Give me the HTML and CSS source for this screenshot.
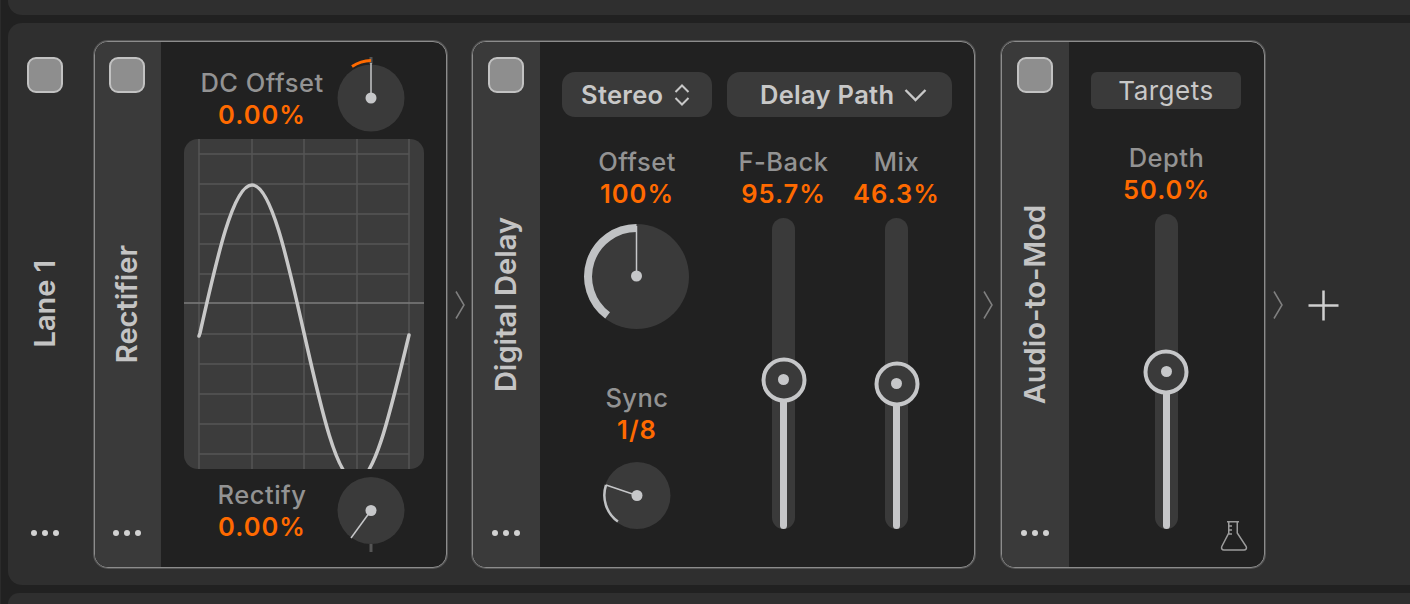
FILE: index.html
```html
<!DOCTYPE html>
<html lang="en">
<head>
<meta charset="utf-8">
<title>Lane 1</title>
<link rel="stylesheet" href="styles.css">
</head>
<body>
<div class="page">
  <div class="lane-edge lane-edge-top"></div>
  <section class="lane">
    <div class="rail">
      <span class="check"></span>
      <h2 class="title">Lane 1</h2>
      <span class="dots"><i></i><i></i><i></i></span>
    </div>

    <article class="device rectifier">
      <div class="strip">
        <span class="check"></span>
        <h3 class="title">Rectifier</h3>
        <span class="dots"><i></i><i></i><i></i></span>
      </div>
      <div class="rect-body">
        <div class="rect-row rect-row-top">
          <div class="param"><div class="name">DC Offset</div><div class="value">0.00%</div></div>
          <svg class="knob-dc" viewBox="337 42 68 97" aria-hidden="true">
            <circle class="k-bg" cx="371" cy="98" r="33.5"/>
            <rect class="k-tick" x="369.5" y="57" width="3" height="7"/>
            <path class="k-arc-orange" d="M352 66.5A37 37 0 0 1 371 60.5"/>
            <path class="k-ptr" d="M371 98V63"/>
            <circle class="k-hub" cx="371" cy="98" r="5.5"/>
          </svg>
        </div>
        <div class="graph">
          <svg viewBox="184 139 240 330" aria-hidden="true">
            <path class="g-line" d="M199 139V469M252 139V469M304 139V469M357 139V469M409 139V469M199 154H409M199 184H409M199 214H409M199 244H409M199 274H409M199 334H409M199 364H409M199 394H409M199 424H409M199 454H409"/>
            <path class="g-axis" d="M184 303H424"/>
            <path class="g-curve" d="M199 336L200 333C217 257.2 233.2 185 252 185C270.8 185 287 257.2 304 333C321 408.8 337.2 481 356 481C374.8 481 391 408.8 409 335"/>
          </svg>
        </div>
        <div class="rect-row rect-row-bottom">
          <div class="param"><div class="name">Rectify</div><div class="value">0.00%</div></div>
          <svg class="knob-rect" viewBox="337 469 68 98" aria-hidden="true">
            <circle class="k-bg" cx="371" cy="510.500" r="33.5"/>
            <rect class="k-tick" x="369.5" y="544" width="3" height="8"/>
            <path class="k-ptr" d="M371 510.500L351 538"/>
            <circle class="k-hub" cx="371" cy="510.500" r="5.5"/>
          </svg>
        </div>
      </div>
    </article>

    <div class="link"><svg viewBox="0 0 10 30" aria-hidden="true"><path d="M1 1.500L9 15L1 28.500"/></svg></div>

    <article class="device delay">
      <div class="strip">
        <span class="check"></span>
        <h3 class="title">Digital Delay</h3>
        <span class="dots"><i></i><i></i><i></i></span>
      </div>
      <div class="delay-body">
        <div class="btn btn-stereo">Stereo
          <svg class="updown" viewBox="0 0 16 22" aria-hidden="true"><path d="M1.500 8L8 1.500L14.500 8M1.500 14L8 20.500L14.500 14"/></svg>
        </div>
        <div class="btn btn-path">Delay Path
          <svg class="down" viewBox="0 0 23 14" aria-hidden="true"><path d="M1.500 2L11.500 12L21.500 2"/></svg>
        </div>
        <div class="delay-left">
          <div class="param"><div class="name">Offset</div><div class="value">100%</div></div>
          <svg class="knob-offset" viewBox="585 224 106 106" aria-hidden="true">
            <circle class="k-bg" cx="637.5" cy="276.500" r="52.5"/>
            <path class="k-arc-wide" d="M608.600 315.400A48.5 48.5 0 0 1 637.5 228"/>
            <path class="k-ptr" d="M637.5 276V226"/>
            <circle class="k-hub" cx="637.5" cy="276" r="5.5"/>
          </svg>
          <div class="param param-sync"><div class="name">Sync</div><div class="value">1/8</div></div>
          <svg class="knob-sync" viewBox="603 462 68 68" aria-hidden="true">
            <circle class="k-bg" cx="637" cy="495.500" r="33.5"/>
            <path class="k-arc-thin" d="M617.900 521.600A32.5 32.5 0 0 1 606 485"/>
            <path class="k-ptr" d="M637 495.500L606 485"/>
            <circle class="k-hub" cx="637" cy="495.500" r="5.5"/>
          </svg>
        </div>
        <div class="fader-col">
          <div class="param"><div class="name">F-Back</div><div class="value">95.7%</div></div>
          <div class="track track-delay"><div class="fill" style="height:149.5px"><span class="thumb"></span></div></div>
        </div>
        <div class="fader-col">
          <div class="param"><div class="name">Mix</div><div class="value">46.3%</div></div>
          <div class="track track-delay"><div class="fill" style="height:145.5px"><span class="thumb"></span></div></div>
        </div>
      </div>
    </article>

    <div class="link"><svg viewBox="0 0 10 30" aria-hidden="true"><path d="M1 1.500L9 15L1 28.500"/></svg></div>

    <article class="device mod">
      <div class="strip">
        <span class="check"></span>
        <h3 class="title">Audio-to-Mod</h3>
        <span class="dots"><i></i><i></i><i></i></span>
      </div>
      <div class="mod-body">
        <div class="btn-targets">Targets</div>
        <div class="fader-col fader-depth">
          <div class="param"><div class="name">Depth</div><div class="value">50.0%</div></div>
          <div class="track track-depth"><div class="fill" style="height:157.5px"><span class="thumb"></span></div></div>
        </div>
        <svg class="flask" viewBox="0 0 28 32" aria-hidden="true">
          <path d="M7 1.750H19M8.750 1.750V13L1.800 26.500C1 28.500 2 30 4 30H24C26 30 27 28.500 26.200 26.500L17.250 13V1.750M8.750 6H12M8.750 10H12M8.750 14H12"/>
        </svg>
      </div>
    </article>

    <div class="link"><svg viewBox="0 0 10 30" aria-hidden="true"><path d="M1 1.500L9 15L1 28.500"/></svg></div>
    <svg class="plus" viewBox="0 0 31 31" aria-hidden="true"><path d="M15.500 0.500V30.500M0.500 15.500H30.500"/></svg>
  </section>
  <div class="lane-edge lane-edge-bottom"></div>
</div>
</body>
</html>
```

FILE: styles.css
```css
* { box-sizing: border-box; }
html, body { margin: 0; padding: 0; }
body { background: #212121; overflow: hidden; }

.page {
  width: 1410px;
  height: 604px;
  overflow: hidden;
  background: #212121;
  box-shadow: inset 1px 0 #2b2b2b;
  padding-left: 8px;
  font-family: Inter, "Liberation Sans", sans-serif;
}

.lane-edge { background: #2f2f2f; }
.lane-edge-top { height: 15px; border-bottom-left-radius: 14px; }
.lane-edge-bottom { height: 11px; margin-top: 8px; border-top-left-radius: 14px; }

.lane {
  display: flex;
  align-items: flex-start;
  height: 562px;
  margin-top: 8px;
  padding-top: 18px;
  background: #2f2f2f;
  border-radius: 14px 0 0 14px;
}

/* shared rail / strip */
.rail, .strip {
  display: grid;
  grid-template-rows: 1fr auto 1fr;
  justify-items: center;
}
.rail { width: 74px; height: 562px; margin: -18px 12px 0 0; padding: 34px 0; }
.rail .dots { margin-bottom: 15px; }
.strip { width: 67px; height: 100%; padding: 15px 1px 15px 0; background: #3a3a3a; flex: none; }
.rectifier .strip { width: 66px; padding-right: 2px; }
.strip .dots { margin-bottom: 16px; }

.check {
  width: 36px;
  height: 36px;
  border-radius: 9px;
  background: #8e8e8e;
  border: 2px solid #c2c2c2;
  align-self: start;
}
.title {
  margin: 0;
  writing-mode: vertical-rl;
  transform: rotate(180deg);
  font-size: 29px;
  line-height: 30px;
  font-weight: 600;
  color: #c4c4c4;
  white-space: nowrap;
}
.dots { display: flex; gap: 5px; align-self: end; }
.dots i { width: 6px; height: 6px; border-radius: 50%; background: #d2d2d2; }

/* devices */
.device {
  display: flex;
  height: 527px;
  flex: none;
  background: #212121;
  border: 1px solid #8c8c8c;
  box-shadow: 0 0 0 1px rgba(140, 140, 140, 0.4);
  border-radius: 14px;
  overflow: hidden;
}
.rectifier { width: 353px; }
.delay { width: 503px; }
.mod { width: 264px; }

.link {
  display: flex;
  justify-content: center;
  width: 26px;
  flex: none;
  padding-top: 249px;
}
.rectifier + .link { width: 25px; }
.link svg { width: 10px; height: 30px; fill: none; stroke: #808080; stroke-width: 1.5; }

.plus { width: 31px; height: 31px; margin: 249px 0 0 17px; fill: none; stroke: #cfcfcf; stroke-width: 2.5; flex: none; }

/* parameter labels */
.param { text-align: center; font-size: 25.5px; line-height: 32px; white-space: nowrap; }
.name { color: #939393; font-weight: 500; letter-spacing: 0.5px; }
.value { color: #ff6a00; font-weight: 600; letter-spacing: 1px; }

/* knobs */
.k-bg { fill: #3a3a3a; }
.k-tick { fill: #555; }
.k-hub { fill: #c6c7c9; }
.k-ptr { fill: none; stroke: #c6c7c9; stroke-width: 1.5; }
.k-arc-orange { fill: none; stroke: #ff6a00; stroke-width: 3; }
.k-arc-wide { fill: none; stroke: #c0c2c4; stroke-width: 8; }
.k-arc-thin { fill: none; stroke: #c0c2c4; stroke-width: 2.5; }

/* rectifier */
.rect-body { flex: 1; display: flex; flex-direction: column; }
.rect-row { display: flex; align-items: flex-start; padding-left: 26px; }
.rect-row .param { width: 150px; }
.rect-row-top { height: 97px; }
.rect-row-top .param { margin-top: 25px; }
.rect-row-bottom { height: 98px; }
.rect-row-bottom .param { margin-top: 10px; }
.knob-dc { width: 68px; height: 97px; flex: none; }
.knob-rect { width: 68px; height: 98px; flex: none; }

.graph {
  width: 240px;
  height: 330px;
  margin-left: 23px;
  border-radius: 14px;
  overflow: hidden;
  background: #3c3c3c;
}
.graph svg { display: block; width: 240px; height: 330px; }
.g-line { fill: none; stroke: #555; stroke-width: 1.5; }
.g-axis { fill: none; stroke: #7d7d7d; stroke-width: 1.5; }
.g-curve { fill: none; stroke: #c8c8c8; stroke-width: 3.5; stroke-linecap: round; stroke-linejoin: round; }

/* delay */
.delay-body {
  flex: 1;
  display: grid;
  grid-template-columns: 165px 113px 113px;
  grid-template-rows: 45px auto;
  padding: 30px 0 0 22px;
}
.btn {
  display: flex;
  align-items: center;
  height: 45px;
  border-radius: 13px;
  background: #3a3a3a;
  color: #c8c8c8;
  font-size: 25.5px;
  font-weight: 600;
  letter-spacing: 0.3px;
  white-space: nowrap;
}
.btn-stereo { width: 150px; padding-left: 19px; gap: 11px; }
.btn-path { grid-column: 2 / span 2; width: 225px; padding-left: 33px; gap: 10px; }
.updown { width: 16px; height: 22px; fill: none; stroke: #c8c8c8; stroke-width: 2; }
.down { width: 23px; height: 14px; fill: none; stroke: #c8c8c8; stroke-width: 2.4; }

.delay-left { display: flex; flex-direction: column; align-items: center; width: 150px; padding-top: 29px; }
.knob-offset { width: 106px; height: 106px; margin-top: 14px; flex: none; }
.param-sync { margin-top: 52px; }
.knob-sync { width: 68px; height: 68px; margin-top: 16px; flex: none; }

.fader-col { display: flex; flex-direction: column; align-items: center; padding-top: 29px; }

.track {
  position: relative;
  width: 23px;
  margin-top: 8px;
  border-radius: 11.5px;
  background: #3a3a3a;
}
.track-delay { height: 311px; }
.track-depth { height: 315px; }
.fill {
  position: absolute;
  left: 8px;
  bottom: 0;
  width: 7px;
  background: #c6c7c9;
  border-radius: 0 0 3.5px 3.5px;
}
.thumb {
  position: absolute;
  top: 0;
  left: 50%;
  width: 45px;
  height: 45px;
  transform: translate(-50%, -50%);
  border-radius: 50%;
  background: #3a3a3a;
  border: 4px solid #c6c7c9;
}
.thumb::after {
  content: "";
  position: absolute;
  top: 50%;
  left: 50%;
  width: 11px;
  height: 11px;
  transform: translate(-50%, -50%);
  border-radius: 50%;
  background: #c6c7c9;
}

/* audio-to-mod */
.mod-body { position: relative; flex: 1; display: flex; flex-direction: column; align-items: center; padding-top: 30px; }
.btn-targets {
  width: 150px;
  height: 37px;
  margin-right: 1px;
  line-height: 37px;
  text-align: center;
  border-radius: 6px;
  background: #3a3a3a;
  color: #c8c8c8;
  font-size: 26px;
  font-weight: 400;
  letter-spacing: 0.5px;
}
.fader-depth { padding-top: 33px; }
.flask {
  position: absolute;
  right: 16px;
  bottom: 15px;
  width: 28px;
  height: 32px;
  fill: none;
  stroke: #9c9c9c;
  stroke-width: 1.5;
}
```
